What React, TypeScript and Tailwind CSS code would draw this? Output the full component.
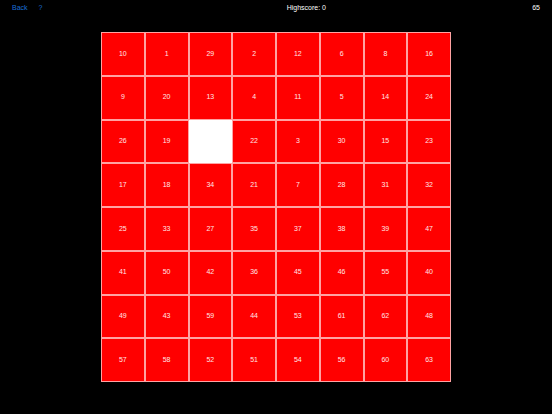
import React from 'react';

const tiles: (number | null)[] = [
  10, 1, 29, 2, 12, 6, 8, 16,
  9, 20, 13, 4, 11, 5, 14, 24,
  26, 19, null, 22, 3, 30, 15, 23,
  17, 18, 34, 21, 7, 28, 31, 32,
  25, 33, 27, 35, 37, 38, 39, 47,
  41, 50, 42, 36, 45, 46, 55, 40,
  49, 43, 59, 44, 53, 61, 62, 48,
  57, 58, 52, 51, 54, 56, 60, 63,
];

export default function App() {
  return (
    <div
      className="w-[552px] h-[414px] bg-black text-white flex flex-col"
      style={{ fontFamily: '"Liberation Sans", Arial, sans-serif' }}
    >
      <div className="h-4 flex items-center px-3 text-[7px]">
        <div className="flex gap-[11px] text-[#1a6fd6]">
          <span>Back</span>
          <span>?</span>
        </div>
        <div className="flex-1 text-center pl-[38px]">Highscore: 0</div>
        <div>65</div>
      </div>

      <div className="mt-4 mx-auto w-[350px] h-[350px] grid grid-cols-8 grid-rows-8 bg-[#ff0000]">
        {tiles.map((n, i) =>
          n === null ? (
            <div key={i} className="bg-white border-[0.5px] border-white" />
          ) : (
            <div
              key={i}
              className="bg-[#ff0000] border-[0.5px] border-[#ffa3a3] flex items-center justify-center text-[7px] text-[#ffe6e6]"
            >
              {n}
            </div>
          )
        )}
      </div>
    </div>
  );
}
